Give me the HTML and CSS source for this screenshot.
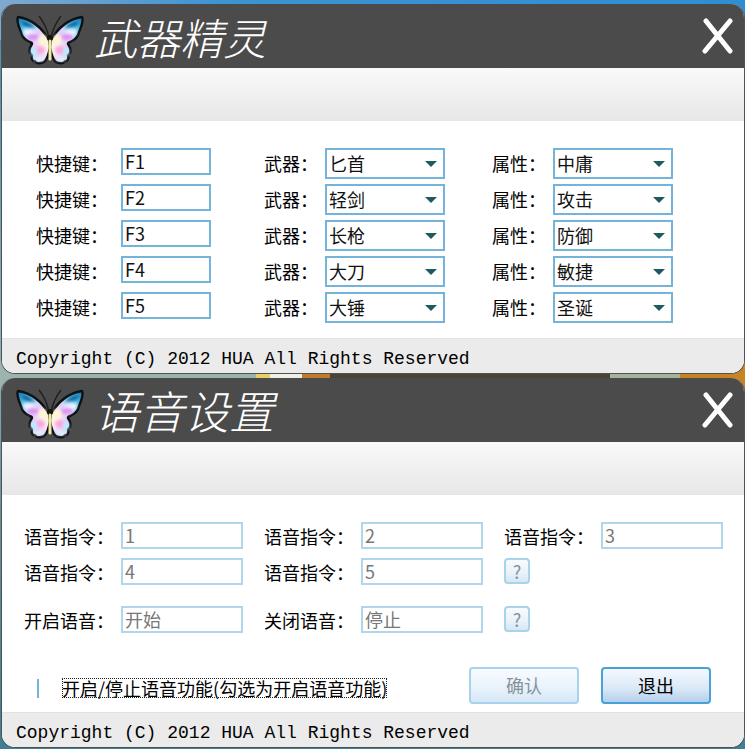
FILE: index.html
```html
<!DOCTYPE html>
<html lang="zh-CN">
<head>
    <meta charset="UTF-8">
    <title>武器精灵</title>
    <link rel="stylesheet" href="styles.css">
</head>
<body>
<svg class="defs" width="0" height="0" aria-hidden="true">
    <defs>
        <radialGradient id="wing" gradientUnits="userSpaceOnUse" cx="34" cy="31" r="40">
            <stop offset="0" stop-color="#fffbd8"/>
            <stop offset="0.2" stop-color="#fbeaf6"/>
            <stop offset="0.42" stop-color="#e3cdf8"/>
            <stop offset="0.62" stop-color="#c4e2fb"/>
            <stop offset="0.8" stop-color="#5cc6ea"/>
            <stop offset="1" stop-color="#1d86bd"/>
        </radialGradient>
        <filter id="soft" x="-30%" y="-30%" width="160%" height="160%">
            <feGaussianBlur stdDeviation="1.4"/>
        </filter>
        <g id="half">
            <path d="M33 25 C29 18 20 5 2 2 C0 6 3 12 5 17 C6 22 9 25 14 27 C18 28 15 30 14 33 C13 37 14 39 16 40 C15 44 17 47 19 46 C21 50 25 48 28 47 C32 44 33 38 34 32 Z"
                  fill="url(#wing)" stroke="#0d1114" stroke-width="2.400" stroke-linejoin="round"/>
            <path d="M5 6 C11 6 16 9 20 13 C14 12 9 12 7 10 Z" fill="#0a6298" filter="url(#soft)"/>
            <path d="M7 15 C12 14 18 16 20 20 C15 22 11 21 8 19 Z" fill="#f4f2ff" filter="url(#soft)"/>
            <ellipse cx="17" cy="22" rx="6" ry="3" fill="#df92f0" filter="url(#soft)"/>
            <ellipse cx="27" cy="25" rx="4" ry="5" fill="#fff6cf" filter="url(#soft)"/>
            <ellipse cx="24" cy="35" rx="5" ry="4" fill="#f9a8df" filter="url(#soft)"/>
            <ellipse cx="18" cy="37" rx="3" ry="4" fill="#b4effd" filter="url(#soft)"/>
            <ellipse cx="23" cy="44" rx="5" ry="2" fill="#dff4ff" filter="url(#soft)"/>
            <path d="M33 23 C31 13 27 6 23 1" fill="none" stroke="#231d20" stroke-width="1.400"/>
        </g>
        <symbol id="butterfly" viewBox="0 0 68 50">
            <use href="#half"/>
            <use href="#half" transform="translate(68 0) scale(-1 1)"/>
            <ellipse cx="34" cy="23" rx="3" ry="3" fill="#171512"/>
            <path d="M34 26 V44" stroke="#efeaa6" stroke-width="3" stroke-linecap="round"/>
        </symbol>
        <symbol id="cross" viewBox="0 0 32 38">
            <path d="M4 4 L28 34 M28 4 L3 34" fill="none" stroke="#fff" stroke-width="5" stroke-linecap="round"/>
        </symbol>
    </defs>
</svg>

<main class="desktop">
    <section class="window">
        <header class="titlebar">
            <svg class="logo" aria-hidden="true"><use href="#butterfly"/></svg>
            <h1 class="title">武器精灵</h1>
            <button type="button" class="close" aria-label="关闭"><svg class="cross"><use href="#cross"/></svg></button>
        </header>
        <div class="band"></div>
        <form class="content weapons">
            <div class="row">
                <div class="field"><label for="key1">快捷键：</label><input type="text" id="key1" value="F1"></div>
                <div class="field short"><label for="weapon1">武器：</label><select id="weapon1"><option>匕首</option></select></div>
                <div class="field short"><label for="attr1">属性：</label><select id="attr1"><option>中庸</option></select></div>
            </div>
            <div class="row">
                <div class="field"><label for="key2">快捷键：</label><input type="text" id="key2" value="F2"></div>
                <div class="field short"><label for="weapon2">武器：</label><select id="weapon2"><option>轻剑</option></select></div>
                <div class="field short"><label for="attr2">属性：</label><select id="attr2"><option>攻击</option></select></div>
            </div>
            <div class="row">
                <div class="field"><label for="key3">快捷键：</label><input type="text" id="key3" value="F3"></div>
                <div class="field short"><label for="weapon3">武器：</label><select id="weapon3"><option>长枪</option></select></div>
                <div class="field short"><label for="attr3">属性：</label><select id="attr3"><option>防御</option></select></div>
            </div>
            <div class="row">
                <div class="field"><label for="key4">快捷键：</label><input type="text" id="key4" value="F4"></div>
                <div class="field short"><label for="weapon4">武器：</label><select id="weapon4"><option>大刀</option></select></div>
                <div class="field short"><label for="attr4">属性：</label><select id="attr4"><option>敏捷</option></select></div>
            </div>
            <div class="row">
                <div class="field"><label for="key5">快捷键：</label><input type="text" id="key5" value="F5"></div>
                <div class="field short"><label for="weapon5">武器：</label><select id="weapon5"><option>大锤</option></select></div>
                <div class="field short"><label for="attr5">属性：</label><select id="attr5"><option>圣诞</option></select></div>
            </div>
        </form>
        <footer class="statusbar">Copyright (C) 2012 HUA All Rights Reserved</footer>
    </section>

    <section class="window">
        <header class="titlebar">
            <svg class="logo" aria-hidden="true"><use href="#butterfly"/></svg>
            <h1 class="title wide">语音设置</h1>
            <button type="button" class="close" aria-label="关闭"><svg class="cross"><use href="#cross"/></svg></button>
        </header>
        <div class="band"></div>
        <form class="content voice">
            <div class="row">
                <div class="field"><label for="cmd1">语音指令：</label><input type="text" id="cmd1" value="1" disabled></div>
                <div class="field"><label for="cmd2">语音指令：</label><input type="text" id="cmd2" value="2" disabled></div>
                <div class="field"><label for="cmd3">语音指令：</label><input type="text" id="cmd3" value="3" disabled></div>
            </div>
            <div class="row">
                <div class="field"><label for="cmd4">语音指令：</label><input type="text" id="cmd4" value="4" disabled></div>
                <div class="field"><label for="cmd5">语音指令：</label><input type="text" id="cmd5" value="5" disabled></div>
                <div class="field"><button type="button" class="help" disabled>?</button></div>
            </div>
            <div class="row spaced">
                <div class="field"><label for="start">开启语音：</label><input type="text" id="start" value="开始" disabled></div>
                <div class="field"><label for="stop">关闭语音：</label><input type="text" id="stop" value="停止" disabled></div>
                <div class="field"><button type="button" class="help" disabled>?</button></div>
            </div>
            <div class="actions">
                <input type="checkbox" id="toggle" class="toggle">
                <label for="toggle" class="toggle-label">开启/停止语音功能(勾选为开启语音功能)</label>
                <button type="submit" class="btn" disabled>确认</button>
                <button type="button" class="btn">退出</button>
            </div>
        </form>
        <footer class="statusbar">Copyright (C) 2012 HUA All Rights Reserved</footer>
    </section>
</main>
</body>
</html>
```
FILE: styles.css
```css
* {
    box-sizing: border-box;
}
body {
    margin: 0;
    font-family: "Noto Sans CJK SC", sans-serif;
    font-size: 18px;
    color: #000;
    background:
        linear-gradient(90deg, #9db3ad 256px, #e9cf62 256px 270px, #eef0e6 270px 302px, #c07a2c 302px 330px, #4b4436 330px 610px, #a3b49b 610px 680px, #c98322 680px) 0 360px / 100% 30px no-repeat,
        linear-gradient(90deg, #7fa9cf, #3d93d3 30%, #2f8ed2) 0 0 / 100% 40px no-repeat,
        linear-gradient(#4d86a8, #8fb0b4 45%, #6d8f90 70%, #3f7f92);
}
.defs {
    position: absolute;
}
.desktop {
    display: flex;
    flex-direction: column;
    gap: 4px;
    padding: 4px 0 1px 1px;
}
.window {
    border: 1px solid #4b5557;
    border-top: 0;
    border-radius: 14px;
    background: #fff;
    overflow: hidden;
}

/* title bar */
.titlebar {
    display: flex;
    align-items: center;
    height: 64px;
    padding: 0 10px 0 14px;
    background: #4b4b4b;
}
.logo {
    width: 68px;
    height: 50px;
    margin-top: 8px;
}
.title {
    margin: 0 0 0 10px;
    font-size: 43px;
    line-height: 64px;
    font-weight: 300;
    font-style: italic;
    color: #fff;
}
.title.wide {
    font-size: 45px;
}
.close {
    margin-left: auto;
    padding: 0;
    border: 0;
    background: none;
}
.cross {
    display: block;
    width: 32px;
    height: 38px;
}
.band {
    height: 53px;
    background: linear-gradient(#f9f9f9, #e7e7e7);
}

/* forms */
.content {
    height: 217px;
    padding-top: 27px;
}
.weapons {
    padding-left: 34px;
    padding-right: 24px;
}
.voice {
    padding-left: 22px;
}
.row {
    display: grid;
    grid-template-columns: repeat(3, 1fr);
    height: 36px;
}
.row.spaced {
    margin-top: 12px;
}
.field {
    display: flex;
    align-items: flex-start;
}
.field label {
    flex: none;
    width: 85px;
    line-height: 30px;
    white-space: nowrap;
}
.field.short label {
    width: 61px;
}
.voice .field label {
    width: 97px;
    line-height: 28px;
}
input[type="text"],
select {
    width: 120px;
    border: 2px solid #74b3da;
    border-radius: 0;
    background: #fff;
    font-family: "Liberation Sans Narrow", "Noto Sans CJK SC", sans-serif;
    font-size: 18px;
    color: #111;
}
input[type="text"] {
    width: 90px;
    height: 27px;
    padding: 0 2px 2px;
}
.voice input[type="text"] {
    width: 122px;
    border-color: #b0d6ec;
    color: #777;
}
select {
    height: 31px;
    padding: 0 2px 2px;
    appearance: none;
    background: #fff url("data:image/svg+xml,%3Csvg xmlns='http://www.w3.org/2000/svg' width='12' height='6'%3E%3Cpath d='M0 0H12L6 6Z' fill='%231e5a60'/%3E%3C/svg%3E") no-repeat right 6px center;
}

/* buttons */
.help,
.btn {
    border: 2px solid #4aa0d8;
    border-radius: 4px;
    background: linear-gradient(#f4f9fe, #d9e8f7 60%, #b5d0ec);
    font-family: inherit;
    font-size: 18px;
    color: #000;
}
.help:disabled,
.btn:disabled {
    border-color: #a9d2ec;
    background: linear-gradient(#f7fbfe, #e9f3fb 55%, #d6e7f6);
    color: #87929a;
}
.help {
    width: 26px;
    height: 26px;
    padding: 0;
    line-height: 20px;
}
.btn {
    width: 110px;
    height: 37px;
    padding: 0 0 2px;
}
.actions {
    display: flex;
    align-items: center;
    gap: 22px;
    margin-top: 25px;
    padding-right: 33px;
}
.toggle {
    appearance: none;
    width: 3px;
    height: 19px;
    margin: 5px 0 0 13px;
    border-left: 2px solid #74b3da;
}
.toggle-label {
    height: 20px;
    margin-top: 5px;
    margin-right: auto;
    outline: 1px dotted #222;
    outline-offset: -1px;
    line-height: 20px;
    white-space: nowrap;
}

.statusbar {
    height: 35px;
    padding-left: 14px;
    border-top: 1px solid #e2e2e2;
    background: #ebebeb;
    font-family: "Liberation Mono", monospace;
    font-size: 18px;
    line-height: 40px;
}
```
